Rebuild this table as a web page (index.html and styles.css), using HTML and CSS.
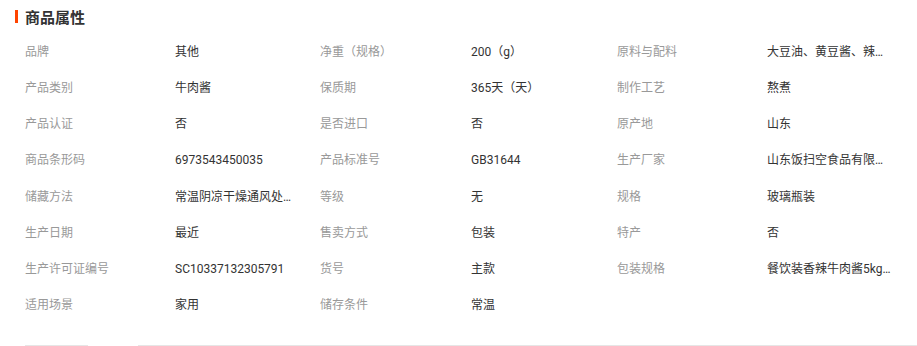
FILE: index.html
```html
<!DOCTYPE html>
<html lang="zh-CN">
<head>
<meta charset="utf-8">
<title>商品属性</title>
<link rel="stylesheet" href="styles.css">
</head>
<body>
<div class="panel">
  <div class="head">
    <span class="bar"></span>
    <h2 class="title">商品属性</h2>
  </div>
  <ul class="attrs">
    <li class="k">品牌</li><li class="v">其他</li>
    <li class="k">净重（规格）</li><li class="v">200（g）</li>
    <li class="k">原料与配料</li><li class="v">大豆油、黄豆酱、辣椒、牛肉、食用盐</li>

    <li class="k">产品类别</li><li class="v">牛肉酱</li>
    <li class="k">保质期</li><li class="v">365天（天）</li>
    <li class="k">制作工艺</li><li class="v">熬煮</li>

    <li class="k">产品认证</li><li class="v">否</li>
    <li class="k">是否进口</li><li class="v">否</li>
    <li class="k">原产地</li><li class="v">山东</li>

    <li class="k">商品条形码</li><li class="v">6973543450035</li>
    <li class="k">产品标准号</li><li class="v">GB31644</li>
    <li class="k">生产厂家</li><li class="v">山东饭扫空食品有限公司</li>

    <li class="k">储藏方法</li><li class="v">常温阴凉干燥通风处保存</li>
    <li class="k">等级</li><li class="v">无</li>
    <li class="k">规格</li><li class="v">玻璃瓶装</li>

    <li class="k">生产日期</li><li class="v">最近</li>
    <li class="k">售卖方式</li><li class="v">包装</li>
    <li class="k">特产</li><li class="v">否</li>

    <li class="k">生产许可证编号</li><li class="v">SC10337132305791</li>
    <li class="k">货号</li><li class="v">主款</li>
    <li class="k">包装规格</li><li class="v">餐饮装香辣牛肉酱5kg装</li>

    <li class="k">适用场景</li><li class="v">家用</li>
    <li class="k">储存条件</li><li class="v">常温</li>
  </ul>
  <div class="foot">
    <span class="seg seg-a"></span>
    <span class="seg seg-b"></span>
  </div>
</div>
</body>
</html>
```

FILE: styles.css
```css
* { box-sizing: border-box; }
html, body { margin: 0; padding: 0; background: #fff; }
body {
  font-family: "Noto Sans CJK SC", "Noto Sans", sans-serif;
  color: #333;
}
.panel { width: 917px; }
.head {
  height: 33px;
  display: flex;
  align-items: center;
  padding-left: 15px;
  gap: 7px;
}
.bar {
  width: 3px;
  height: 13px;
  background: #ff4400;
}
.title {
  margin: 0;
  font-size: 15px;
  font-weight: 700;
  color: #333;
  line-height: 20px;
}
.attrs {
  list-style: none;
  margin: 0;
  padding: 0 0 0 25px;
  display: grid;
  grid-template-columns: 150px 145px 151px 146px 150px auto;
  grid-auto-rows: 36.15px;
  align-items: center;
  font-size: 12px;
  line-height: 18px;
}
.k { color: #999; white-space: nowrap; }
.v {
  color: #333;
  font-family: Roboto, "Noto Sans CJK SC", sans-serif;
  max-width: 126px;
  padding-top: 2px;
  white-space: nowrap;
  overflow: hidden;
  text-overflow: ellipsis;
}
.foot {
  margin-top: 23px;
  display: flex;
  padding-left: 25px;
}
.seg { height: 1px; background: #e6e6e6; display: block; }
.seg-a { width: 63px; }
.seg-b { margin-left: 50px; flex: 1; }
```
